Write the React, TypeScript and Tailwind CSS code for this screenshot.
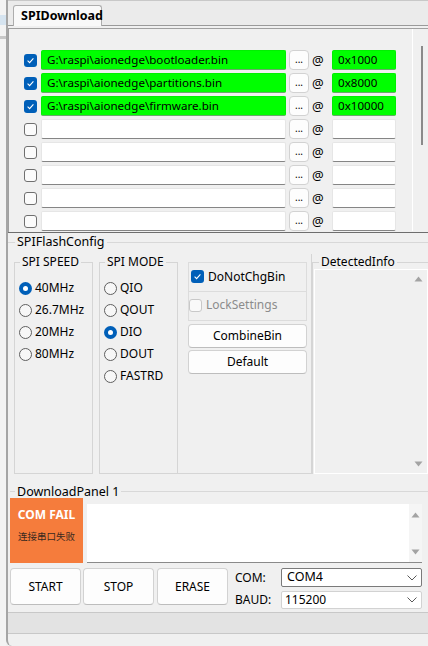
import React from "react";

const files = [
  { checked: true, path: "G:\\raspi\\aionedge\\bootloader.bin", addr: "0x1000" },
  { checked: true, path: "G:\\raspi\\aionedge\\partitions.bin", addr: "0x8000" },
  { checked: true, path: "G:\\raspi\\aionedge\\firmware.bin", addr: "0x10000" },
  { checked: false, path: "", addr: "" },
  { checked: false, path: "", addr: "" },
  { checked: false, path: "", addr: "" },
  { checked: false, path: "", addr: "" },
  { checked: false, path: "", addr: "" },
];

function Check({ checked, disabled }: { checked?: boolean; disabled?: boolean }) {
  if (checked)
    return (
      <div className="w-[13px] h-[13px] rounded-[3px] bg-[#005fb8] flex items-center justify-center shrink-0">
        <svg width="9" height="9" viewBox="0 0 9 9">
          <path d="M1.6 4.7 L3.6 6.6 L7.4 2.4" fill="none" stroke="white" strokeWidth="1.1" />
        </svg>
      </div>
    );
  return (
    <div
      className={
        disabled
          ? "w-[13px] h-[13px] rounded-[3px] border border-[#c8c8c8] bg-[#f9f9f9] shrink-0"
          : "w-[13px] h-[13px] rounded-[3px] border border-[#6f6f6f] bg-[#fbfbfb] shrink-0"
      }
    />
  );
}

function Radio({ checked, label }: { checked?: boolean; label: string }) {
  return (
    <div className="flex items-center h-[22px] gap-[3px]">
      {checked ? (
        <div className="w-[13px] h-[13px] rounded-full bg-[#005fb8] flex items-center justify-center shrink-0">
          <div className="w-[5px] h-[5px] rounded-full bg-white" />
        </div>
      ) : (
        <div className="w-[13px] h-[13px] rounded-full border border-[#5f5f5f] bg-[#f7f7f7] shrink-0" />
      )}
      <span>{label}</span>
    </div>
  );
}

function UpArrow() {
  return (
    <svg width="9" height="6" viewBox="0 0 9 6">
      <path d="M0.5 5.5 L4.5 0.5 L8.5 5.5 Z" fill="#a3a3a3" />
    </svg>
  );
}
function DownArrow() {
  return (
    <svg width="9" height="6" viewBox="0 0 9 6">
      <path d="M0.5 0.5 L4.5 5.5 L8.5 0.5 Z" fill="#a3a3a3" />
    </svg>
  );
}
function Chevron() {
  return (
    <svg width="10" height="6" viewBox="0 0 10 6">
      <path d="M0.5 0.5 L5 5 L9.5 0.5" fill="none" stroke="#5a5a5a" strokeWidth="1" />
    </svg>
  );
}

export default function App() {
  return (
    <div className="w-[428px] h-[646px] flex bg-[#f0f0f0] overflow-hidden text-[12px] text-black font-['Noto_Sans',sans-serif] leading-none">
      {/* left strip */}
      <div className="w-[6px] shrink-0 bg-[#f3f3f3] flex flex-col">
        <div className="h-[15px]" />
        <div className="h-[10px] bg-[#d6e4f0]" />
        <div className="h-[11px]" />
        <div className="h-[3px] bg-[#c8c8c8]" />
      </div>
      {/* main */}
      <div className="flex-1 flex flex-col border-l-2 border-[#a5a5a5] rounded-bl-[6px]">
        {/* tab strip */}
        <div className="h-[26px] shrink-0 bg-[#ebebeb] border-t border-[#c8c8c8] border-b border-b-[#9a9a9a] flex items-end pl-[5px]">
          <div className="w-[89px] h-[21px] bg-[#f9f9f9] border border-[#adadad] border-b-0 rounded-t-[3px] flex items-center pl-[7px] font-bold text-[12.5px] mb-[-1px]">
            SPIDownload
          </div>
        </div>
        {/* file panel */}
        <div className="h-[207px] shrink-0 border-b border-[#6e6e6e] flex overflow-hidden">
          <div className="flex-1 mt-[2px] border-t border-l border-[#a0a0a0] flex flex-col">
            <div className="flex">
              <div className="w-[403px] flex flex-col gap-[3px] pt-[21px]">
                {files.map((f, i) => (
                  <div key={i} className="flex items-center h-[20px]">
                    <div className="w-[15px]" />
                    <Check checked={f.checked} />
                    <div
                      className={
                        "ml-[4px] w-[245px] h-[20px] rounded-[2px] border flex items-center pl-[5px] text-[11.6px] " +
                        (f.path
                          ? "bg-[#00ff00] border-[#00f000] border-b-[#6aa86a]"
                          : "bg-white border-[#e6e6e6] border-b-[#858585]")
                      }
                    >
                      {f.path}
                    </div>
                    <div className="ml-[3px] w-[20px] h-[20px] rounded-[4px] border border-[#d2d2d2] bg-[#fdfdfd] flex items-end justify-center pb-[5px] text-[10px]">
                      ...
                    </div>
                    <div className="ml-[3px] w-[20px] text-[13px]">@</div>
                    <div
                      className={
                        "w-[64px] h-[20px] rounded-[2px] border flex items-center pl-[5px] text-[11.6px] " +
                        (f.addr
                          ? "bg-[#00ff00] border-[#00f000] border-b-[#6aa86a]"
                          : "bg-white border-[#e6e6e6] border-b-[#858585]")
                      }
                    >
                      {f.addr}
                    </div>
                  </div>
                ))}
              </div>
              <div className="flex-1 border-l border-white flex justify-center pt-[17px]">
                <div className="w-[2px] h-[99px] bg-[#8a8a8a] ml-[2px]" />
              </div>
            </div>
          </div>
        </div>
        {/* config section */}
        <div className="h-[250px] shrink-0 flex flex-col">
          <fieldset className="mt-[1px] border-t border-[#d8d8d8] flex-1 min-h-0">
            <legend className="ml-[7px] px-[2px] h-[16px] leading-[16px] text-[12.5px]">SPIFlashConfig</legend>
            <div className="flex mt-[4px] h-[220px]">
              {/* SPI SPEED */}
              <fieldset className="ml-[6px] w-[79px] border border-[#d5d5d5] pl-[4px] pt-[7px]">
                <legend className="ml-[1px] px-[2px] h-[16px] leading-[16px]">SPI SPEED</legend>
                <Radio checked label="40MHz" />
                <Radio label="26.7MHz" />
                <Radio label="20MHz" />
                <Radio label="80MHz" />
              </fieldset>
              {/* SPI MODE */}
              <fieldset className="ml-[6px] w-[79px] border border-[#d5d5d5] pl-[4px] pt-[7px]">
                <legend className="ml-[1px] px-[2px] h-[16px] leading-[16px]">SPI MODE</legend>
                <Radio label="QIO" />
                <Radio label="QOUT" />
                <Radio checked label="DIO" />
                <Radio label="DOUT" />
                <Radio label="FASTRD" />
              </fieldset>
              {/* options column */}
              <div className="w-[134px] border-r border-b border-[#d5d5d5] flex flex-col pt-[8px] pl-[10px] pr-[4px]">
                <div className="h-[30px] border border-[#dcdcdc] flex items-center gap-[4px] pl-[2px] pb-[1px]">
                  <Check checked />
                  <span>DoNotChgBin</span>
                </div>
                <div className="h-[29px] border-l border-r border-b border-[#dcdcdc] flex items-center gap-[4px] pb-[2px]">
                  <Check disabled />
                  <span className="text-[#8c8c8c]">LockSettings</span>
                </div>
                <div className="mt-[3px] h-[24px] rounded-[4px] border border-[#d2d2d2] border-b-[#bdbdbd] bg-[#fdfdfd] flex items-center justify-center">
                  CombineBin
                </div>
                <div className="mt-[2px] h-[24px] rounded-[4px] border border-[#d2d2d2] border-b-[#bdbdbd] bg-[#fdfdfd] flex items-center justify-center">
                  Default
                </div>
              </div>
              {/* DetectedInfo */}
              <fieldset className="flex-1 border-t border-l border-[#d5d5d5] flex flex-col">
                <legend className="ml-[6px] px-[2px] h-[16px] leading-[16px]">DetectedInfo</legend>
                <div className="ml-[1px] mt-[-1px] flex-1 border border-white flex">
                  <div className="flex-1" />
                  <div className="w-[18px] flex flex-col items-center justify-between pt-[6px] pb-[6px]">
                    <UpArrow />
                    <DownArrow />
                  </div>
                </div>
              </fieldset>
            </div>
          </fieldset>
        </div>
        {/* download panel */}
        <fieldset className="ml-[2px] border-t border-[#d8d8d8] shrink-0">
          <legend className="ml-[5px] px-[2px] h-[16px] leading-[17px] text-[12.5px]">DownloadPanel 1</legend>
          <div className="flex h-[65px] mt-[-1px]">
            <div className="w-[73px] bg-[#f57c3c] flex flex-col items-center pt-[11px]">
              <span className="text-white font-bold text-[12px]">COM FAIL</span>
              <span className="mt-[11px] text-[9.5px] text-[#3a2a20] font-['Noto_Sans_CJK_SC',sans-serif]">连接串口失败</span>
            </div>
            <div className="ml-[4px] mt-[6px] w-[335px] bg-white border-b border-[#8a8a8a] flex">
              <div className="flex-1" />
              <div className="w-[13px] bg-[#f5f5f5] flex flex-col items-center justify-between pt-[8px] pb-[7px]">
                <UpArrow />
                <DownArrow />
              </div>
            </div>
          </div>
          <div className="flex mt-[5px] h-[44px]">
            <div className="w-[71px] h-[37px] rounded-[4px] border border-[#d2d2d2] border-b-[#bdbdbd] bg-[#fdfdfd] flex items-center justify-center">START</div>
            <div className="ml-[2px] w-[71px] h-[37px] rounded-[4px] border border-[#d2d2d2] border-b-[#bdbdbd] bg-[#fdfdfd] flex items-center justify-center">STOP</div>
            <div className="ml-[3px] w-[71px] h-[37px] rounded-[4px] border border-[#d2d2d2] border-b-[#bdbdbd] bg-[#fdfdfd] flex items-center justify-center">ERASE</div>
            <div className="ml-[7px] flex flex-col gap-[4px]">
              <div className="flex items-center h-[19px]">
                <span className="w-[46px]">COM:</span>
                <div className="w-[141px] h-[19px] bg-white border border-[#7a7a7a] rounded-[2px] flex items-center justify-between pl-[5px] pr-[4px]">
                  <span className="text-[12.5px]">COM4</span>
                  <Chevron />
                </div>
              </div>
              <div className="flex items-center h-[18px]">
                <span className="w-[46px]">BAUD:</span>
                <div className="w-[141px] h-[18px] bg-white border border-[#d2d2d2] rounded-[2px] flex items-center justify-between pl-[3px] pr-[4px]">
                  <span>115200</span>
                  <Chevron />
                </div>
              </div>
            </div>
          </div>
        </fieldset>
        <div className="h-[22px] shrink-0 bg-[#e3e3e3] border-t border-b border-[#c8c8c8]" />
        <div className="flex-1" />
      </div>
    </div>
  );
}
